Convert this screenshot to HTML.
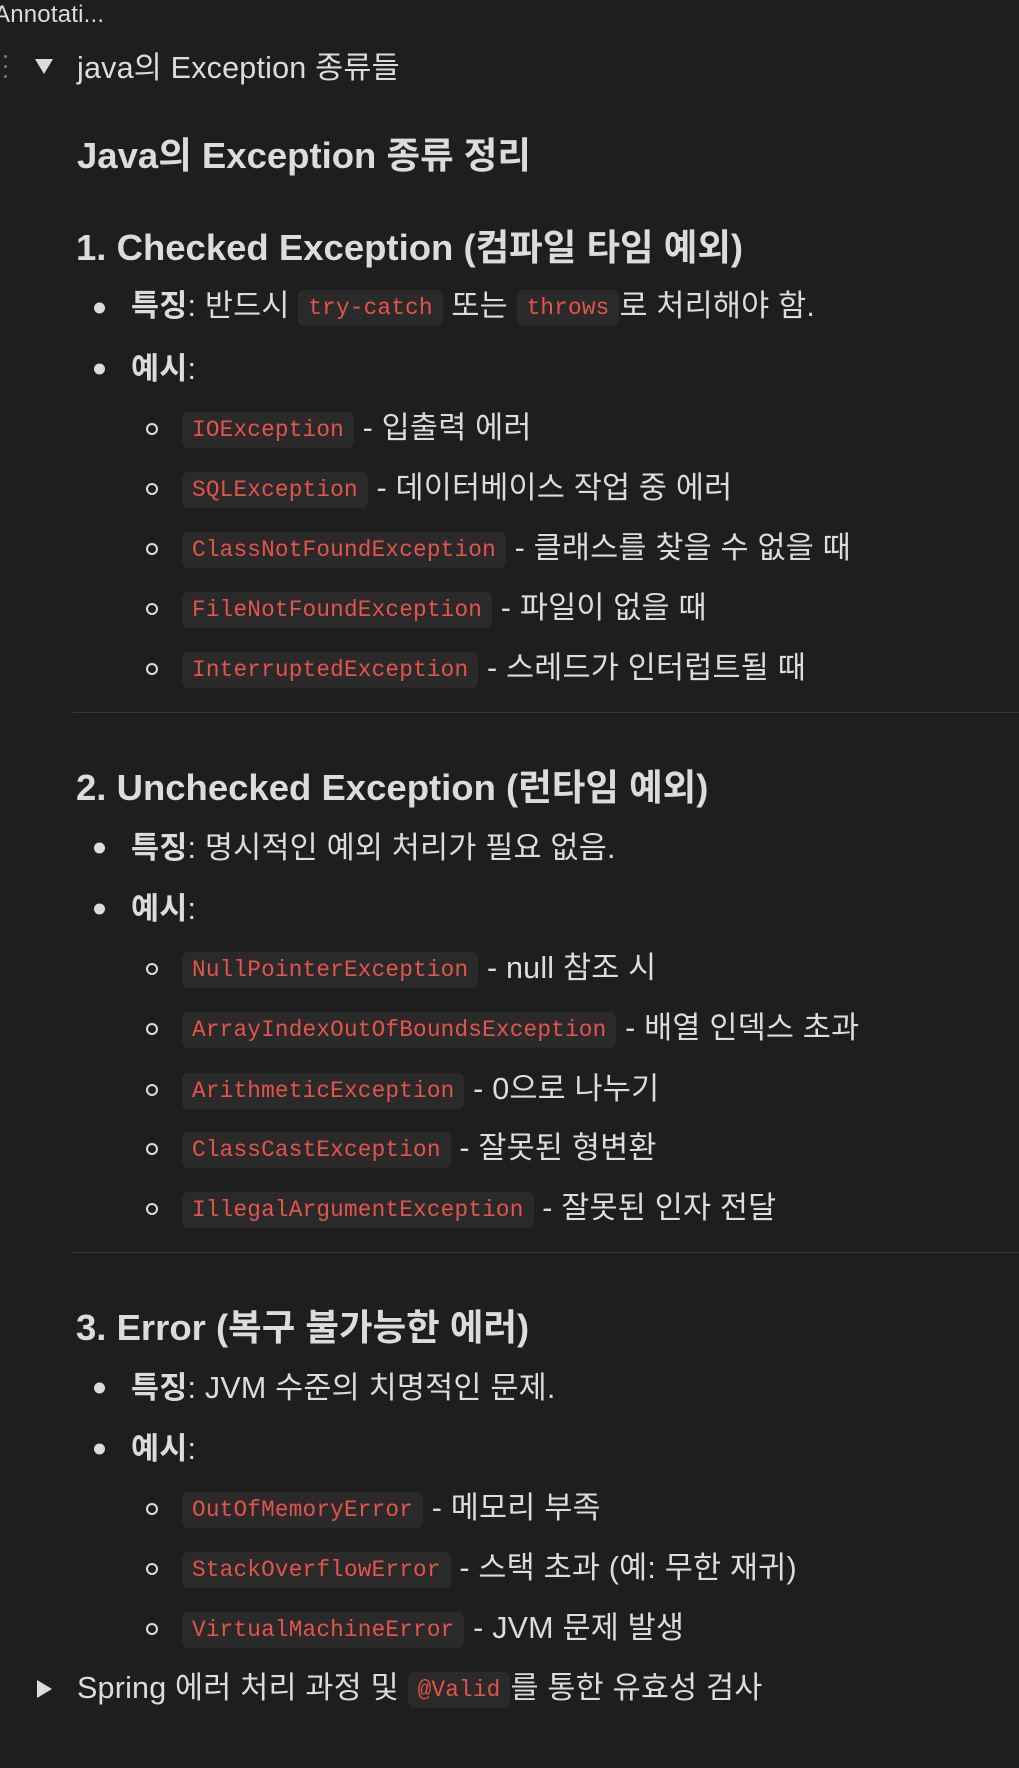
<!DOCTYPE html>
<html><head><meta charset="utf-8"><style>
body{margin:0;width:1019px;height:1768px;background:#1e1e1e;color:#dcdcdc;font-family:"Liberation Sans","Noto Sans CJK KR",sans-serif;overflow:hidden;position:relative}
.l{position:absolute;white-space:nowrap;font-size:30.5px;line-height:38px;transform:translateY(-48%);letter-spacing:0.2px}
.h2{font-size:36.5px;font-weight:bold;line-height:46px;letter-spacing:0}
.h3{font-size:36.5px;font-weight:bold;line-height:44px;letter-spacing:0}
code{font-family:"Liberation Mono",monospace;font-size:22.7px;color:#e5534b;background:#2a2a2a;border-radius:6px;padding:5px 10px;letter-spacing:0.2px;position:relative;top:-2px}
b{font-weight:bold}
.dot{position:absolute;width:11px;height:11px;border-radius:50%;background:#dcdcdc;transform:translateY(-50%)}
.circ{position:absolute;width:8px;height:8px;border-radius:50%;border:2px solid #dcdcdc;transform:translateY(-50%)}
.hr{position:absolute;left:73px;right:0;height:1px;background:#363636}
</style></head><body>
<div class="l" style="left:-6px;top:14px;font-size:24px">Annotati...</div>
<div style="position:absolute;left:4px;top:55px;width:3px;height:3px;background:#777;border-radius:50%"></div>
<div style="position:absolute;left:4px;top:65px;width:3px;height:3px;background:#777;border-radius:50%"></div>
<div style="position:absolute;left:4px;top:75px;width:3px;height:3px;background:#777;border-radius:50%"></div>
<svg style="position:absolute;left:35px;top:59px" width="18" height="16"><path d="M0 0H18L9 15Z" fill="#dcdcdc"/></svg>
<div class="l" style="left:77px;top:67px">java의 Exception 종류들</div>
<div class="l h2" style="left:77px;top:155px">Java의 Exception 종류 정리</div>

<div class="l h3" style="left:76px;top:247px">1. Checked Exception (컴파일 타임 예외)</div>
<div class="dot" style="left:94px;top:308px"></div><div class="l" style="left:131px;top:307px"><b>특징</b>: 반드시 <code>try-catch</code> 또는 <code>throws</code>로 처리해야 함.</div>
<div class="dot" style="left:94px;top:369px"></div><div class="l" style="left:131px;top:368px"><b>예시</b>:</div>
<div class="circ" style="left:146px;top:429px"></div><div class="l" style="left:182px;top:429px"><code>IOException</code> - 입출력 에러</div>
<div class="circ" style="left:146px;top:489px"></div><div class="l" style="left:182px;top:489px"><code>SQLException</code> - 데이터베이스 작업 중 에러</div>
<div class="circ" style="left:146px;top:549px"></div><div class="l" style="left:182px;top:549px"><code>ClassNotFoundException</code> - 클래스를 찾을 수 없을 때</div>
<div class="circ" style="left:146px;top:609px"></div><div class="l" style="left:182px;top:609px"><code>FileNotFoundException</code> - 파일이 없을 때</div>
<div class="circ" style="left:146px;top:669px"></div><div class="l" style="left:182px;top:669px"><code>InterruptedException</code> - 스레드가 인터럽트될 때</div>
<div class="hr" style="top:712px"></div>

<div class="l h3" style="left:76px;top:787px">2. Unchecked Exception (런타임 예외)</div>
<div class="dot" style="left:94px;top:848px"></div><div class="l" style="left:131px;top:847px"><b>특징</b>: 명시적인 예외 처리가 필요 없음.</div>
<div class="dot" style="left:94px;top:909px"></div><div class="l" style="left:131px;top:908px"><b>예시</b>:</div>
<div class="circ" style="left:146px;top:969px"></div><div class="l" style="left:182px;top:969px"><code>NullPointerException</code> - null 참조 시</div>
<div class="circ" style="left:146px;top:1029px"></div><div class="l" style="left:182px;top:1029px"><code>ArrayIndexOutOfBoundsException</code> - 배열 인덱스 초과</div>
<div class="circ" style="left:146px;top:1090px"></div><div class="l" style="left:182px;top:1090px"><code>ArithmeticException</code> - 0으로 나누기</div>
<div class="circ" style="left:146px;top:1149px"></div><div class="l" style="left:182px;top:1149px"><code>ClassCastException</code> - 잘못된 형변환</div>
<div class="circ" style="left:146px;top:1209px"></div><div class="l" style="left:182px;top:1209px"><code>IllegalArgumentException</code> - 잘못된 인자 전달</div>
<div class="hr" style="top:1252px"></div>

<div class="l h3" style="left:76px;top:1327px">3. Error (복구 불가능한 에러)</div>
<div class="dot" style="left:94px;top:1388px"></div><div class="l" style="left:131px;top:1387px"><b>특징</b>: JVM 수준의 치명적인 문제.</div>
<div class="dot" style="left:94px;top:1449px"></div><div class="l" style="left:131px;top:1448px"><b>예시</b>:</div>
<div class="circ" style="left:146px;top:1509px"></div><div class="l" style="left:182px;top:1509px"><code>OutOfMemoryError</code> - 메모리 부족</div>
<div class="circ" style="left:146px;top:1569px"></div><div class="l" style="left:182px;top:1569px"><code>StackOverflowError</code> - 스택 초과 (예: 무한 재귀)</div>
<div class="circ" style="left:146px;top:1629px"></div><div class="l" style="left:182px;top:1629px"><code>VirtualMachineError</code> - JVM 문제 발생</div>

<svg style="position:absolute;left:37px;top:1680px" width="16" height="18"><path d="M0 0V18L15 9Z" fill="#dcdcdc"/></svg>
<div class="l" style="left:77px;top:1689px">Spring 에러 처리 과정 및 <code>@Valid</code>를 통한 유효성 검사</div>
</body></html>
